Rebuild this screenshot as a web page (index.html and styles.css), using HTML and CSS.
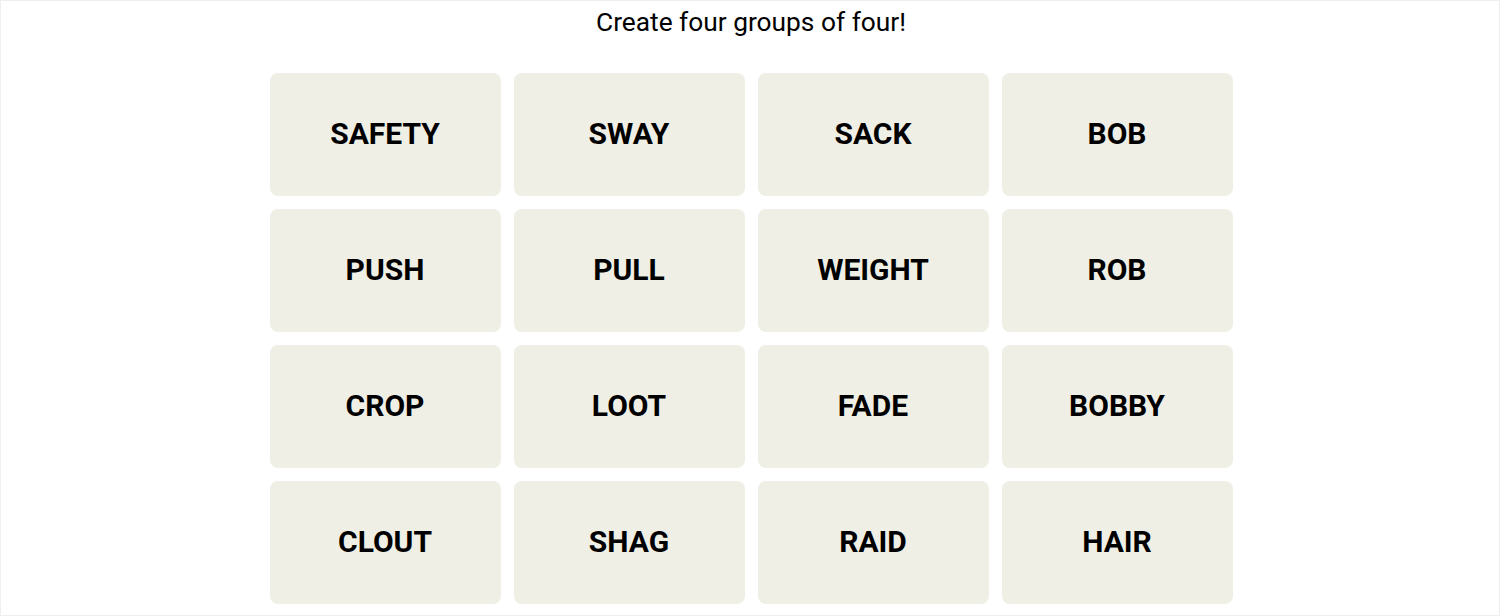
FILE: index.html
```html
<!DOCTYPE html>
<html lang="en">
<head>
  <meta charset="UTF-8">
  <title>Connections</title>
  <link rel="stylesheet" href="styles.css">
</head>
<body>
  <div class="frame">
    <p class="intro">Create four groups of four!</p>
    <div class="board">
      <div class="tile">SAFETY</div>
      <div class="tile">SWAY</div>
      <div class="tile">SACK</div>
      <div class="tile">BOB</div>
      <div class="tile">PUSH</div>
      <div class="tile">PULL</div>
      <div class="tile">WEIGHT</div>
      <div class="tile">ROB</div>
      <div class="tile">CROP</div>
      <div class="tile">LOOT</div>
      <div class="tile">FADE</div>
      <div class="tile">BOBBY</div>
      <div class="tile">CLOUT</div>
      <div class="tile">SHAG</div>
      <div class="tile">RAID</div>
      <div class="tile">HAIR</div>
    </div>
  </div>
</body>
</html>
```

FILE: styles.css
```css
body {
  margin: 0;
  background: #fff;
  font-family: Roboto, 'Liberation Sans', sans-serif;
  color: #000;
}

.frame {
  box-sizing: border-box;
  height: 616px;
  border: 1px solid #efefef;
  padding-left: 2px;
  overflow: hidden;
}

.intro {
  margin: 4px 0 0;
  font-size: 26.3px;
  line-height: 34px;
  text-align: center;
}

.board {
  display: grid;
  grid-template-columns: repeat(4, 231px);
  grid-auto-rows: 123px;
  gap: 13px;
  justify-content: center;
  margin-top: 34px;
}

.tile {
  display: flex;
  align-items: center;
  justify-content: center;
  padding-bottom: 2px;
  background: #efefe6;
  border-radius: 8px;
  font-size: 30px;
  font-weight: 700;
}
```
